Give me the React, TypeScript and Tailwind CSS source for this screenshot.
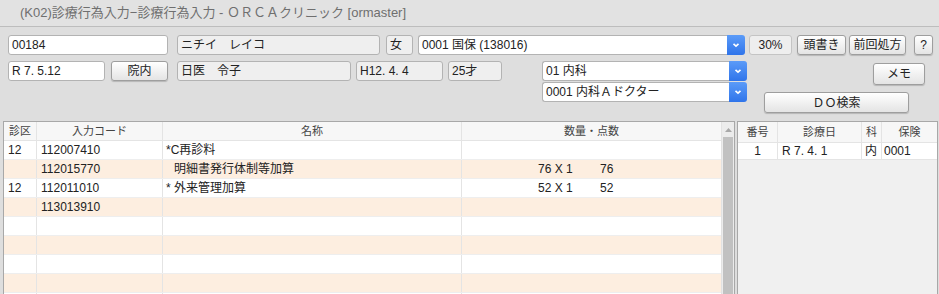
import React from 'react';

const font = { fontFamily: '"Liberation Sans", "Noto Sans CJK JP", sans-serif' };

type Row = { k: string; code: string; name: string; indent?: boolean; qty: string; pts: string };

const rows: Row[] = [
  { k: '12', code: '112007410', name: '*C再診料', qty: '', pts: '' },
  { k: '', code: '112015770', name: '明細書発行体制等加算', indent: true, qty: '76 X 1', pts: '76' },
  { k: '12', code: '112011010', name: '* 外来管理加算', qty: '52 X 1', pts: '52' },
  { k: '', code: '113013910', name: '', qty: '', pts: '' },
  { k: '', code: '', name: '', qty: '', pts: '' },
  { k: '', code: '', name: '', qty: '', pts: '' },
  { k: '', code: '', name: '', qty: '', pts: '' },
  { k: '', code: '', name: '', qty: '', pts: '' },
  { k: '', code: '', name: '', qty: '', pts: '' },
];

function Field({ w, text, white }: { w: string; text: string; white?: boolean }) {
  return (
    <div
      className={`${w} h-[20px] shrink-0 rounded-[3px] border border-[#b3b3b3] px-[3px] text-[12px] leading-[18px] text-[#222] whitespace-pre
        ${white ? 'bg-white' : 'bg-[#efefef]'}`}
    >
      {text}
    </div>
  );
}

function Btn({ w, h = 'h-[20px]', text }: { w: string; h?: string; text: string }) {
  return (
    <div
      className={`${w} ${h} shrink-0 flex items-center justify-center rounded-[3px] border border-[#9e9e9e] bg-gradient-to-b from-white to-[#e4e4e4] text-[12px] text-[#222] shadow-[0_1px_1px_rgba(0,0,0,0.18)]`}
    >
      {text}
    </div>
  );
}

function Select({ w, text }: { w: string; text: string }) {
  return (
    <div className={`${w} h-[20px] shrink-0 flex`}>
      <div className="flex-1 rounded-l-[3px] border border-r-0 border-[#b3b3b3] bg-white px-[3px] text-[12px] leading-[18px] text-[#222]">
        {text}
      </div>
      <div className="w-[18px] flex items-center justify-center rounded-r-[3px] bg-gradient-to-b from-[#5b9bf8] to-[#2f74ea]">
        <svg width="8" height="6" viewBox="0 0 8 6">
          <path d="M1.5 1.8 L4 4.2 L6.5 1.8" stroke="white" strokeWidth="1.6" fill="none" />
        </svg>
      </div>
    </div>
  );
}

export default function App() {
  return (
    <div style={font} className="w-[939px] h-[294px] overflow-hidden bg-[#dedede] text-[#222]">
      <div className="h-[27px] border-b border-[#bdbdbd] bg-[#e2e2e2] pl-[20px] text-[13px] leading-[26px] text-[#6f6f6f]">
        (K02)診療行為入力−診療行為入力 - ＯＲＣＡクリニック [ormaster]
      </div>

      <div className="h-[94px] pt-[8px] pl-[8px]">
        <div className="flex items-start">
          <Field w="w-[160px]" text="00184" white />
          <div className="w-[9px]" />
          <Field w="w-[203px]" text="ニチイ　レイコ" />
          <div className="w-[6px]" />
          <Field w="w-[27px]" text="女" />
          <div className="w-[5px]" />
          <Select w="w-[327px]" text="0001 国保 (138016)" />
          <div className="w-[4px]" />
          <div className="w-[43px] h-[20px] shrink-0 rounded-[3px] border border-[#c4c4c4] bg-[#eeeeee] text-center text-[12px] leading-[18px]">
            30%
          </div>
          <div className="w-[5px]" />
          <Btn w="w-[49px]" text="頭書き" />
          <div className="w-[3px]" />
          <Btn w="w-[57px]" text="前回処方" />
          <div className="w-[8px]" />
          <Btn w="w-[19px]" text="?" />
        </div>

        <div className="mt-[6px] flex items-start">
          <Field w="w-[97px]" text="R 7. 5.12" white />
          <div className="w-[6px]" />
          <Btn w="w-[57px]" text="院内" />
          <div className="w-[9px]" />
          <Field w="w-[174px]" text="日医　令子" />
          <div className="w-[5px]" />
          <Field w="w-[87px]" text="H12. 4. 4" />
          <div className="w-[5px]" />
          <Field w="w-[54px]" text="25才" />
          <div className="w-[40px]" />
          <div className="flex flex-col gap-[1px]">
            <Select w="w-[205px]" text="01 内科" />
            <Select w="w-[205px]" text="0001 内科Ａドクター" />
          </div>
          <div className="flex w-[192px] flex-col">
            <div className="mt-[2px] self-end mr-[14px]">
              <Btn w="w-[52px]" h="h-[22px]" text="メモ" />
            </div>
            <div className="mt-[7px] ml-[17px]">
              <Btn w="w-[145px]" h="h-[21px]" text="ＤＯ検索" />
            </div>
          </div>
        </div>
      </div>

      <div className="flex items-start">
        <div className="ml-[3px] flex h-[200px] w-[732px] border border-[#a8a8a8] bg-white">
          <div className="w-[717px]">
            <div className="flex h-[19px] border-b border-[#e4e4e4] bg-[#f7f7f7] text-[11px] leading-[18px] text-[#444]">
              <div className="w-[33px] border-r border-[#e4e4e4] text-center">診区</div>
              <div className="w-[126px] border-r border-[#e4e4e4] text-center">入力コード</div>
              <div className="w-[299px] border-r border-[#e4e4e4] text-center">名称</div>
              <div className="w-[259px] text-center">数量・点数</div>
            </div>
            {rows.map((r, i) => (
              <div
                key={i}
                className={`flex h-[19px] border-b border-[#eeeeee] text-[12px] leading-[18px] text-[#222] ${i % 2 ? 'bg-[#fdeee0]' : 'bg-white'}`}
              >
                <div className="w-[33px] border-r border-[#e4e4e4] pl-[4px]">{r.k}</div>
                <div className="w-[126px] border-r border-[#e4e4e4] pl-[4px]">{r.code}</div>
                <div className={`w-[299px] border-r border-[#e4e4e4] ${r.indent ? 'pl-[11px]' : 'pl-[3px]'}`}>{r.name}</div>
                <div className="flex w-[259px] pl-[76px]">
                  <span className="w-[62px]">{r.qty}</span>
                  <span>{r.pts}</span>
                </div>
              </div>
            ))}
          </div>
          <div className="flex w-[13px] flex-col border-l border-[#e2e2e2] bg-[#ececec]">
            <div className="flex h-[15px] items-center justify-center">
              <svg width="7" height="4" viewBox="0 0 7 4">
                <path d="M0 4 L3.5 0 L7 4 Z" fill="#a8a8a8" />
              </svg>
            </div>
            <div className="mx-[1px] flex-1 bg-[#c1c1c1]" />
          </div>
        </div>

        <div className="ml-[2px] h-[200px] w-[201px] border border-[#a8a8a8] bg-[#f0f0f0]">
          <div className="flex h-[21px] border-b border-[#e4e4e4] bg-[#f7f7f7] text-[11px] leading-[20px] text-[#444]">
            <div className="w-[40px] border-r border-[#e4e4e4] text-center">番号</div>
            <div className="w-[84px] border-r border-[#e4e4e4] text-center">診療日</div>
            <div className="w-[20px] border-r border-[#e4e4e4] text-center">科</div>
            <div className="flex-1 text-center">保険</div>
          </div>
          <div className="flex h-[17px] border-b border-[#e4e4e4] bg-white text-[12px] leading-[16px]">
            <div className="w-[40px] border-r border-[#e4e4e4] text-center">1</div>
            <div className="w-[84px] border-r border-[#e4e4e4] pl-[4px]">R 7. 4. 1</div>
            <div className="w-[20px] border-r border-[#e4e4e4] pl-[3px]">内</div>
            <div className="flex-1 pl-[2px]">0001</div>
          </div>
        </div>
      </div>
    </div>
  );
}
